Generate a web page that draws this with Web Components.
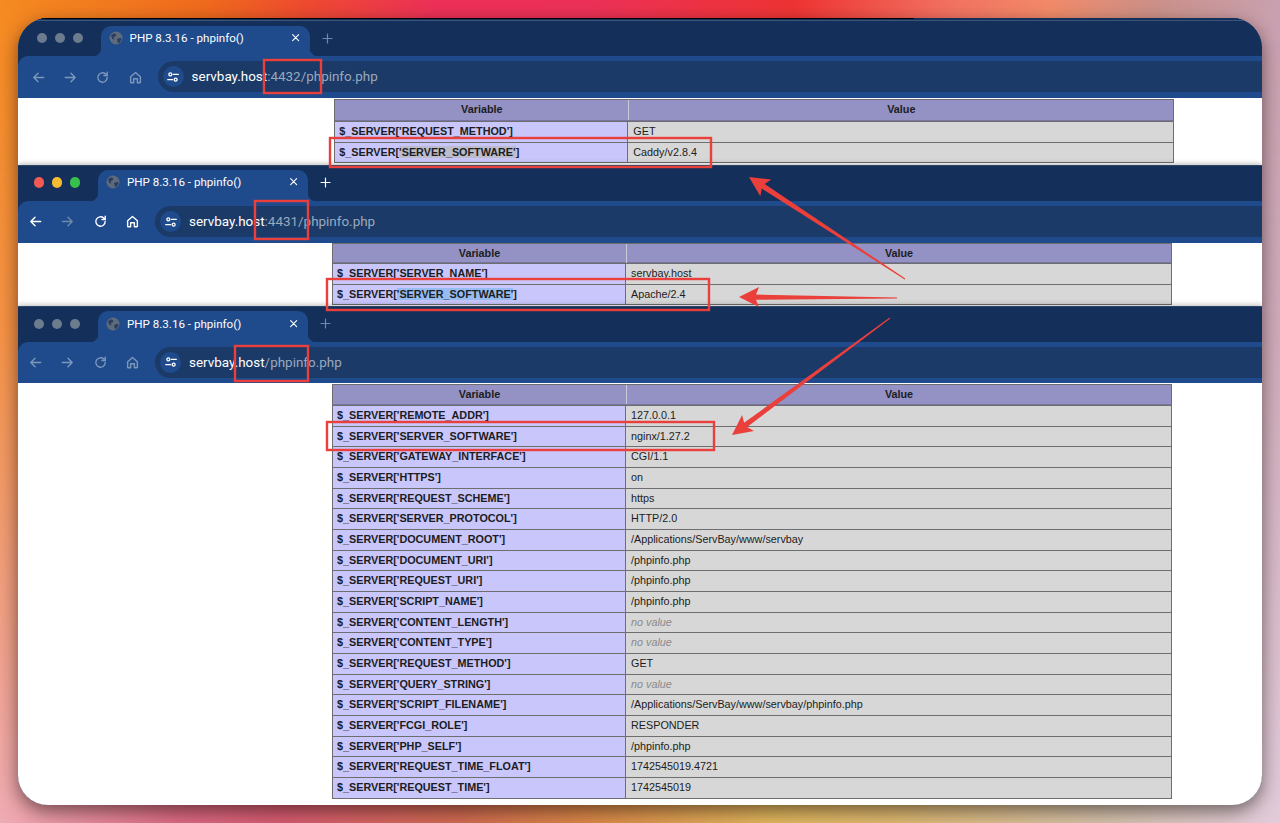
<!DOCTYPE html>
<html>
<head>
<meta charset="utf-8">
<title>phpinfo server comparison</title>
<style>
  html, body { margin: 0; padding: 0; background: #d98080; }
</style>
</head>
<body>
<desk-top>
  <browser-pane state="blur" shift="2.6" strip="38" body="66.7" port=":4432/phpinfo.php" host="servbay.host">
    <php-table shift="2.3" top="1" head="21">
      <php-row name="$_SERVER['REQUEST_METHOD']">GET</php-row>
      <php-row name="$_SERVER['SERVER_SOFTWARE']" sel="gray">Caddy/v2.8.4</php-row>
    </php-table>
  </browser-pane>
  <browser-pane state="focus" strip="35.7" body="63" port=":4431/phpinfo.php" host="servbay.host">
    <php-table head="19">
      <php-row name="$_SERVER['SERVER_NAME']">servbay.host</php-row>
      <php-row name="$_SERVER['SERVER_SOFTWARE']" sel="blue">Apache/2.4</php-row>
    </php-table>
  </browser-pane>
  <browser-pane state="blur" strip="36" tools="41.3" body="423" port="/phpinfo.php" host="servbay.host">
    <php-table top="1">
      <php-row name="$_SERVER['REMOTE_ADDR']">127.0.0.1</php-row>
      <php-row name="$_SERVER['SERVER_SOFTWARE']">nginx/1.27.2</php-row>
      <php-row name="$_SERVER['GATEWAY_INTERFACE']">CGI/1.1</php-row>
      <php-row name="$_SERVER['HTTPS']">on</php-row>
      <php-row name="$_SERVER['REQUEST_SCHEME']">https</php-row>
      <php-row name="$_SERVER['SERVER_PROTOCOL']">HTTP/2.0</php-row>
      <php-row name="$_SERVER['DOCUMENT_ROOT']">/Applications/ServBay/www/servbay</php-row>
      <php-row name="$_SERVER['DOCUMENT_URI']">/phpinfo.php</php-row>
      <php-row name="$_SERVER['REQUEST_URI']">/phpinfo.php</php-row>
      <php-row name="$_SERVER['SCRIPT_NAME']">/phpinfo.php</php-row>
      <php-row name="$_SERVER['CONTENT_LENGTH']" empty>no value</php-row>
      <php-row name="$_SERVER['CONTENT_TYPE']" empty>no value</php-row>
      <php-row name="$_SERVER['REQUEST_METHOD']">GET</php-row>
      <php-row name="$_SERVER['QUERY_STRING']" empty>no value</php-row>
      <php-row name="$_SERVER['SCRIPT_FILENAME']">/Applications/ServBay/www/servbay/phpinfo.php</php-row>
      <php-row name="$_SERVER['FCGI_ROLE']">RESPONDER</php-row>
      <php-row name="$_SERVER['PHP_SELF']">/phpinfo.php</php-row>
      <php-row name="$_SERVER['REQUEST_TIME_FLOAT']">1742545019.4721</php-row>
      <php-row name="$_SERVER['REQUEST_TIME']">1742545019</php-row>
    </php-table>
  </browser-pane>
  <mark-up slot="over"></mark-up>
</desk-top>

<script>
// desktop wallpaper + the rounded window that clips the three browsers
class DeskTop extends HTMLElement {
  connectedCallback() {
    this.attachShadow({ mode: 'open' });
    this.shadowRoot.innerHTML = `
      <style>
        :host {
          display: block;
          position: relative;
          width: 1280px;
          height: 823px;
          padding: 18px;
          box-sizing: border-box;
          overflow: hidden;
          background: linear-gradient(90deg, #eeacb4 0%, #dc6a84 14%, #d85c72 22%, #d26c52 36%, #dc8a48 46%, #e2b85e 60%, #dfba72 70%, #d6c2ac 86%, #e2cbdb 100%);
        }
        .top {
          position: absolute;
          inset: 0;
          background: linear-gradient(90deg, #f58a20 0%, #ef6a1c 16%, #ee4a30 24%, #ec3058 34%, #ec3058 46%, #ee3333 62%, #f27060 74%, #f28a68 82%, #cc9088 90%, #c8a0b0 100%);
          -webkit-mask-image: linear-gradient(#000 0%, rgba(0,0,0,.75) 40%, transparent 100%);
          mask-image: linear-gradient(#000 0%, rgba(0,0,0,.75) 40%, transparent 100%);
        }
        .win {
          position: relative;
          display: flex;
          flex-direction: column;
          height: 787px;
          border-radius: 30px;
          overflow: hidden;
          background: #fff;
        }
        .win::after {
          content: "";
          position: absolute;
          left: 0; top: 0;
          width: 896px; height: 1px;
          background: #000;
        }
        .drop {
          position: absolute;
          left: 18px; top: 18px;
          width: 1244px; height: 787px;
          border-radius: 30px;
          box-shadow: 0 6px 18px rgba(0,0,0,.5);
        }
      </style>
      <div class="top"></div>
      <div class="drop"></div>
      <div class="win"><slot></slot></div>
      <slot name="over"></slot>
    `;
  }
}

const ICONS = {
  back: '<path d="M13.5 8H3M7.5 3.5 3 8l4.5 4.5"/>',
  fwd: '<path d="M2.5 8H13M8.5 3.5 13 8l-4.5 4.5"/>',
  reload: '<path d="M13 8a5 5 0 1 1-1.6-3.7L13 5.8"/><path d="M13 2.4v3.4H9.6"/>',
  home: '<path d="M2.8 7.2 8 2.6l5.2 4.6V13a.6.6 0 0 1-.6.6H10V9.4H6v4.2H3.4a.6.6 0 0 1-.6-.6z"/>',
  tune: '<circle cx="5" cy="5" r="1.7"/><path d="M8.6 5H14"/><circle cx="11" cy="11" r="1.7"/><path d="M2 11h5.4"/>',
  close: '<path d="M3.5 3.5l8 8M11.5 3.5l-8 8"/>',
  plus: '<path d="M8 2.5v11M2.5 8h11"/>'
};
const icon = (name, size, cls) =>
  `<svg class="${cls || ''}" width="${size}" height="${size}" viewBox="0 0 16 16" fill="none" stroke="currentColor" stroke-width="1.5" stroke-linecap="round" stroke-linejoin="round">${ICONS[name]}</svg>`;

// one chrome window: tab strip, toolbar, then a clipped bit of the page
class BrowserPane extends HTMLElement {
  connectedCallback() {
    const focus = this.getAttribute('state') === 'focus';
    const shift = parseFloat(this.getAttribute('shift') || 0);
    const strip = this.getAttribute('strip');
    const body = this.getAttribute('body');
    const tools = this.getAttribute('tools') || 42.3;
    const dim = focus ? '#fff' : '#7d97bb';
    this.attachShadow({ mode: 'open' });
    this.shadowRoot.innerHTML = `
      <style>
        :host {
          display: block;
          position: relative;
          font-family: Roboto, "Liberation Sans", sans-serif;
          box-shadow: 0 -1px 5px rgba(0,0,0,.28);
        }
        .wrap { background: #14305a; }
        .strip {
          display: flex;
          align-items: flex-end;
          height: ${strip}px;
          box-sizing: border-box;
          padding-left: ${shift}px;
          background: #14305a;
          box-shadow: inset 0 1px #2c4568;
        }
        :host(:first-child) .strip { box-shadow: inset 0 2px #14305a, inset 0 3px #3a5578; }
        .dots { display: flex; gap: 7.6px; width: 80px; padding-left: 16px; box-sizing: border-box; margin-bottom: 12.8px; }
        .dots i { width: 10.4px; height: 10.4px; border-radius: 50%; background: #6d7b8f; flex: none; }
        .focus .dots i:nth-child(1) { background: #f05a52; }
        .focus .dots i:nth-child(2) { background: #f5bb33; }
        .focus .dots i:nth-child(3) { background: #38c14a; }
        .tab {
          position: relative;
          display: flex;
          align-items: center;
          width: 209.5px;
          height: 30.5px;
          box-sizing: border-box;
          padding: 0 8px 6px 8px;
          background: #1f4b8c;
          border-radius: 10px 10px 0 0;
          color: #fff;
          font-size: 11.6px;
          flex: none;
        }
        .tab::before, .tab::after {
          content: "";
          position: absolute;
          bottom: 0;
          width: 8px; height: 8px;
        }
        .tab::before { left: -8px; background: radial-gradient(circle at 0 0, transparent 8px, #1f4b8c 8.5px); }
        .tab::after { right: -8px; background: radial-gradient(circle at 100% 0, transparent 8px, #1f4b8c 8.5px); }
        .fav { flex: none; margin-right: 7px; }
        .title { flex: 1; white-space: nowrap; }
        .x { color: #fff; flex: none; }
        .plus { color: ${focus ? '#fff' : '#6f88ab'}; margin: 0 0 11.5px 11px; flex: none; }
        .tools {
          display: flex;
          align-items: center;
          height: ${tools}px;
          box-sizing: border-box;
          padding: 0 0 0 ${shift}px;
          background: #1f4b8c;
          border-radius: 10px 0 0 0;
        }
        .nav { display: flex; width: 137px; padding-left: 1.5px; box-sizing: border-box; flex: none; }
        .nav span { width: 32.3px; display: flex; justify-content: center; color: ${dim}; }
        .nav span.off { color: ${focus ? '#6f88ab' : '#7d97bb'}; }
        .omni {
          flex: 1;
          display: flex;
          align-items: center;
          height: 31px;
          margin-top: -.4px;
          border-radius: 16px 0 0 16px;
          background: #1b3a68;
          font-size: 13.45px;
          color: #9aa9bd;
          white-space: nowrap;
        }
        .tune {
          width: 21px; height: 21px;
          margin: 0 8px 0 5px;
          border-radius: 50%;
          background: #1f4b8c;
          color: #fff;
          display: flex; align-items: center; justify-content: center;
          flex: none;
        }
        .omni b { font-weight: 400; color: #fff; }
        .page { height: ${body}px; overflow: hidden; background: #fff; }
      </style>
      <div class="wrap ${focus ? 'focus' : ''}">
        <div class="strip">
          <div class="dots"><i></i><i></i><i></i></div>
          <div class="tab">
            <svg class="fav" width="14" height="14" viewBox="0 0 14 14">
              <circle cx="7" cy="7" r="6.5" fill="#5d6b7c"/>
              <path d="M2 4.2 5 2.2 7.5 3.4 6.4 5.6 4.6 6.2 5.4 8.4 3.4 8zM8 8l3.6-1.2 1 1.6-2.4 3.6-1.4-.4z" fill="#2a3f5e"/>
            </svg>
            <span class="title">PHP 8.3.16 - phpinfo()</span>
            ${icon('close', 12, 'x')}
          </div>
          ${icon('plus', 13, 'plus')}
        </div>
        <div class="tools">
          <div class="nav">
            <span>${icon('back', 15)}</span>
            <span class="off">${icon('fwd', 15)}</span>
            <span>${icon('reload', 15)}</span>
            <span>${icon('home', 15)}</span>
          </div>
          <div class="omni">
            <span class="tune">${icon('tune', 14)}</span>
            <b>${this.getAttribute('host')}</b><span>${this.getAttribute('port')}</span>
          </div>
        </div>
        <div class="page"><slot></slot></div>
      </div>
    `;
  }
}

// the phpinfo table
class PhpTable extends HTMLElement {
  connectedCallback() {
    const shift = parseFloat(this.getAttribute('shift') || 0);
    const top = this.getAttribute('top') || 0;
    const head = parseFloat(this.getAttribute('head') || 20);
    this.attachShadow({ mode: 'open' });
    this.shadowRoot.innerHTML = `
      <style>
        :host {
          display: block;
          width: 840px;
          margin-left: ${314 + shift}px;
          margin-top: ${top}px;
          box-sizing: border-box;
          border: 1px solid #6e6e6e;
          font-family: "Liberation Sans", Arial, sans-serif;
          font-size: 10.8px;
          color: #1c1c22;
        }
        .head {
          display: grid;
          grid-template-columns: 293px 1fr;
          height: ${head}px;
          background: #9491c4;
          font-weight: 700;
          text-align: center;
          line-height: 19px;
          border-bottom: 1px solid #77759f;
          box-sizing: border-box;
        }
        .head span + span { border-left: 1px solid #c9c9d8; }
      </style>
      <div class="head"><span>Variable</span><span>Value</span></div>
      <slot></slot>
    `;
  }
}

class PhpRow extends HTMLElement {
  connectedCallback() {
    const name = this.getAttribute('name');
    const sel = this.getAttribute('sel');
    const m = name.match(/^(\$_SERVER\[)('.*')(\])$/);
    const bg = sel === 'blue' ? '#97bcf2' : '#bcbccb';
    const label = sel
      ? `${m[1]}<span style="background:${bg}">${m[2]}</span>${m[3]}`
      : name;
    // rows sit on a 20.67px pitch in the screenshot, whole pixels keep the lines crisp
    const i = [...this.parentElement.children].indexOf(this);
    const h = Math.round((i + 1) * 20.67) - Math.round(i * 20.67);
    this.attachShadow({ mode: 'open' });
    this.shadowRoot.innerHTML = `
      <style>
        :host { display: grid; grid-template-columns: 292px 1fr; height: ${h}px; box-sizing: border-box; border-top: 1px solid #6e6e6e; }
        .k { background: #c8c6fb; font-weight: 700; padding-left: 4px; line-height: ${h - 2}px; white-space: nowrap; }
        .v { background: #d7d7d7; padding-left: 5px; line-height: ${h - 2}px; border-left: 1px solid #6e6e6e; white-space: nowrap; }
        :host([empty]) .v { color: #8a8a8a; font-style: italic; }
      </style>
      <div class="k">${label}</div>
      <div class="v"><slot></slot></div>
    `;
  }
}

// red boxes and arrows drawn over the screenshot
class MarkUp extends HTMLElement {
  connectedCallback() {
    const boxes = [
      [264, 60, 57, 33], [330, 138, 381, 29],
      [255, 201, 53, 38], [327, 279, 382, 31],
      [235, 346, 73, 35], [327, 422, 387, 28]
    ];
    const arrow = (x1, y1, x2, y2) => {
      const a = Math.atan2(y2 - y1, x2 - x1), len = 20, hw = 10, nw = 2.6, tail = .5;
      const ux = Math.cos(a), uy = Math.sin(a), px = -uy, py = ux;
      const bx = x2 - ux * len, by = y2 - uy * len;
      const nx = x2 - ux * (len - 3), ny = y2 - uy * (len - 3);
      const pts = [
        [x1 + px * tail, y1 + py * tail], [nx + px * nw, ny + py * nw],
        [bx + px * hw, by + py * hw], [x2, y2],
        [bx - px * hw, by - py * hw], [nx - px * nw, ny - py * nw],
        [x1 - px * tail, y1 - py * tail]
      ];
      return `<polygon points="${pts.map(p => p.map(n => n.toFixed(1)).join(',')).join(' ')}"/>`;
    };
    this.attachShadow({ mode: 'open' });
    this.shadowRoot.innerHTML = `
      <style>
        :host { position: absolute; inset: 0; pointer-events: none; display: block; }
        svg { display: block; }
        rect { fill: none; stroke: #ea3f3a; stroke-width: 2.4; }
        polygon { fill: #ea3f3a; }
      </style>
      <svg width="1280" height="823" viewBox="0 0 1280 823">
        ${boxes.map(b => `<rect x="${b[0]}" y="${b[1]}" width="${b[2]}" height="${b[3]}"/>`).join('')}
        ${arrow(905, 279, 749, 177)}
        ${arrow(897, 298, 739, 297)}
        ${arrow(890, 318, 732, 435)}
      </svg>
    `;
  }
}

customElements.define('desk-top', DeskTop);
customElements.define('browser-pane', BrowserPane);
customElements.define('php-table', PhpTable);
customElements.define('php-row', PhpRow);
customElements.define('mark-up', MarkUp);
</script>
</body>
</html>
